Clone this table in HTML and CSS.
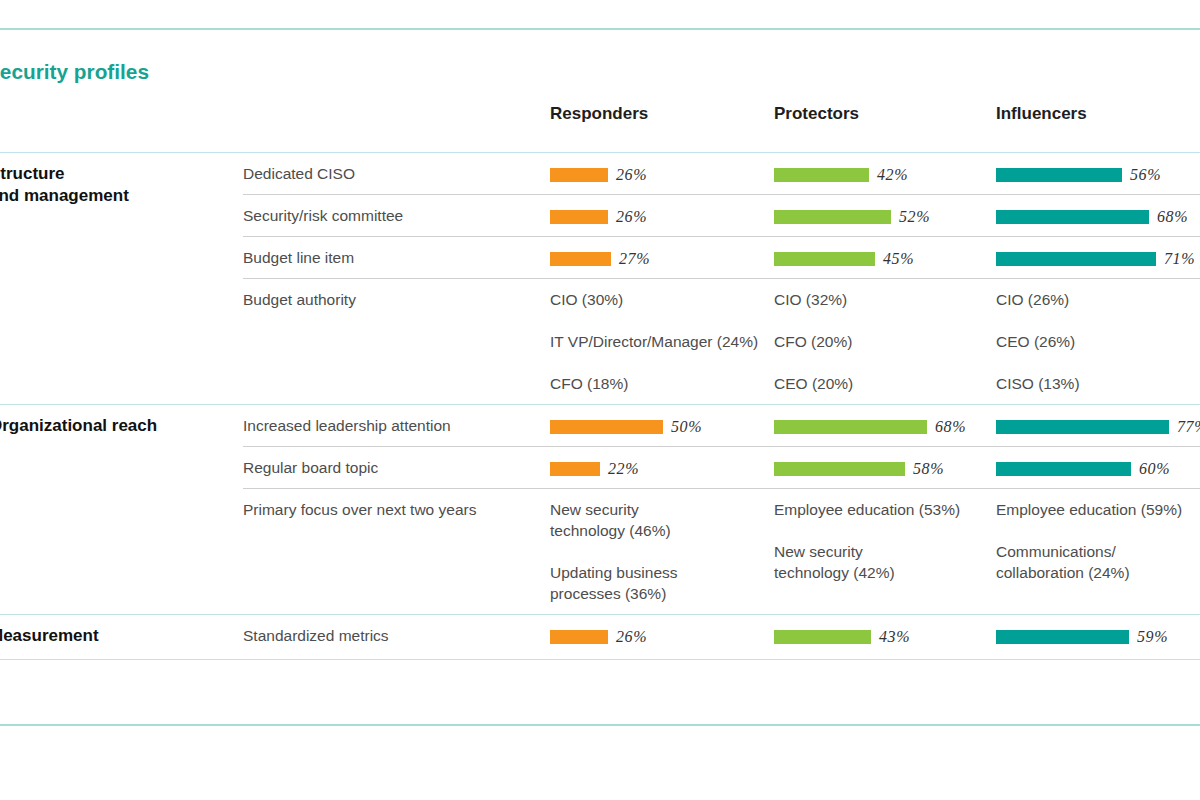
FILE: index.html
```html
<!DOCTYPE html>
<html lang="en">
<head>
<meta charset="utf-8">
<title>Security profiles</title>
<link rel="stylesheet" href="styles.css">
</head>
<body>
<div class="sheet">
  <div class="topline"></div>
  <h1 class="title">Security profiles</h1>

  <div class="head">
    <div></div>
    <div></div>
    <div class="colhead">Responders</div>
    <div class="colhead">Protectors</div>
    <div class="colhead">Influencers</div>
  </div>

  <section class="section">
    <div class="cat">Structure<br>and management</div>
    <div class="rows">
      <div class="row">
        <div class="label">Dedicated CISO</div>
        <div class="cell"><span class="bar orange" style="width:58px"></span><span class="pct">26%</span></div>
        <div class="cell"><span class="bar green" style="width:95px"></span><span class="pct">42%</span></div>
        <div class="cell"><span class="bar teal" style="width:126px"></span><span class="pct">56%</span></div>
      </div>
      <div class="row">
        <div class="label">Security/risk committee</div>
        <div class="cell"><span class="bar orange" style="width:58px"></span><span class="pct">26%</span></div>
        <div class="cell"><span class="bar green" style="width:117px"></span><span class="pct">52%</span></div>
        <div class="cell"><span class="bar teal" style="width:153px"></span><span class="pct">68%</span></div>
      </div>
      <div class="row">
        <div class="label">Budget line item</div>
        <div class="cell"><span class="bar orange" style="width:61px"></span><span class="pct">27%</span></div>
        <div class="cell"><span class="bar green" style="width:101px"></span><span class="pct">45%</span></div>
        <div class="cell"><span class="bar teal" style="width:160px"></span><span class="pct">71%</span></div>
      </div>
      <div class="row">
        <div class="label">Budget authority</div>
        <div class="list">
          <p>CIO (30%)</p>
          <p>IT VP/Director/Manager (24%)</p>
          <p>CFO (18%)</p>
        </div>
        <div class="list">
          <p>CIO (32%)</p>
          <p>CFO (20%)</p>
          <p>CEO (20%)</p>
        </div>
        <div class="list">
          <p>CIO (26%)</p>
          <p>CEO (26%)</p>
          <p>CISO (13%)</p>
        </div>
      </div>
    </div>
  </section>

  <section class="section">
    <div class="cat">Organizational reach</div>
    <div class="rows">
      <div class="row">
        <div class="label">Increased leadership attention</div>
        <div class="cell"><span class="bar orange" style="width:113px"></span><span class="pct">50%</span></div>
        <div class="cell"><span class="bar green" style="width:153px"></span><span class="pct">68%</span></div>
        <div class="cell"><span class="bar teal" style="width:173px"></span><span class="pct">77%</span></div>
      </div>
      <div class="row">
        <div class="label">Regular board topic</div>
        <div class="cell"><span class="bar orange" style="width:50px"></span><span class="pct">22%</span></div>
        <div class="cell"><span class="bar green" style="width:131px"></span><span class="pct">58%</span></div>
        <div class="cell"><span class="bar teal" style="width:135px"></span><span class="pct">60%</span></div>
      </div>
      <div class="row">
        <div class="label">Primary focus over next two years</div>
        <div class="list">
          <p>New security<br>technology (46%)</p>
          <p>Updating business<br>processes (36%)</p>
        </div>
        <div class="list">
          <p>Employee education (53%)</p>
          <p>New security<br>technology (42%)</p>
        </div>
        <div class="list">
          <p>Employee education (59%)</p>
          <p>Communications/<br>collaboration (24%)</p>
        </div>
      </div>
    </div>
  </section>

  <section class="section last">
    <div class="cat">Measurement</div>
    <div class="rows">
      <div class="row">
        <div class="label">Standardized metrics</div>
        <div class="cell"><span class="bar orange" style="width:58px"></span><span class="pct">26%</span></div>
        <div class="cell"><span class="bar green" style="width:97px"></span><span class="pct">43%</span></div>
        <div class="cell"><span class="bar teal" style="width:133px"></span><span class="pct">59%</span></div>
      </div>
    </div>
  </section>

  <div class="bottomline"></div>
</div>
</body>
</html>
```

FILE: styles.css
```css
html, body {
  margin: 0;
  padding: 0;
  background: #ffffff;
}

body {
  width: 1200px;
  height: 800px;
  overflow: hidden;
  font-family: "Liberation Sans", Arial, sans-serif;
  color: #4d4d4d;
}

.sheet {
  margin-left: -11px;
  width: 1240px;
  padding-top: 28px;
}

.topline {
  border-top: 2px solid #a8dcd6;
}

.title {
  margin: 29px 0 0 -3px;
  font-size: 20.8px;
  line-height: 26px;
  font-weight: bold;
  color: #17a391;
}

.head {
  display: grid;
  grid-template-columns: 254px 307px 224px 222px 1fr;
  margin-top: 19px;
  padding-bottom: 28px;
  border-bottom: 1px solid #c3e3ea;
}

.colhead {
  font-size: 17px;
  line-height: 20px;
  font-weight: bold;
  color: #1e1e1e;
}

.section {
  display: grid;
  grid-template-columns: 254px 1fr;
  border-bottom: 1px solid #bfe2e2;
}

.cat {
  padding-top: 10px;
  font-size: 17px;
  line-height: 22px;
  font-weight: bold;
  color: #111111;
}

.rows {
  display: flex;
  flex-direction: column;
}

.row {
  display: grid;
  grid-template-columns: 307px 224px 222px 1fr;
  padding: 10px 0;
  border-top: 1px solid #cfcfcf;
  font-size: 15.5px;
  line-height: 21px;
}

.row:first-child {
  border-top: none;
}

.section.last .row {
  padding-bottom: 13px;
}

.label {
  color: #4d4d4d;
}

.cell {
  display: flex;
  align-items: center;
  height: 21px;
}

.bar {
  display: block;
  height: 14px;
  margin-top: 3px;
}

.orange { background: #f7941e; }
.green { background: #8dc63f; }
.teal { background: #00a096; }

.pct {
  margin-left: 8px;
  margin-top: 2px;
  font-family: "Liberation Serif", "Times New Roman", serif;
  font-style: italic;
  font-size: 16px;
  letter-spacing: 0.6px;
  color: #333333;
}

.list {
  display: flex;
  flex-direction: column;
  gap: 21px;
}

.list p {
  margin: 0;
}

.bottomline {
  margin-top: 64px;
  border-top: 2px solid #a8dcd6;
}
```
